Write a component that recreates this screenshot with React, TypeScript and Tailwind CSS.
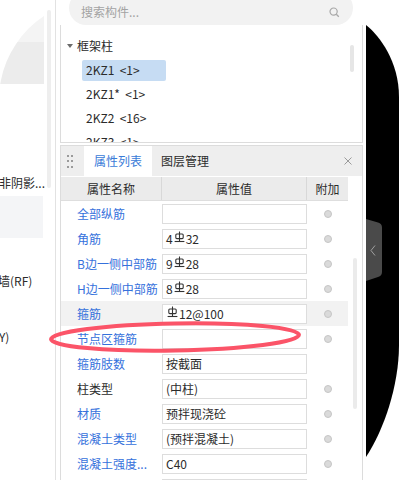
import React from "react";

const Rebar = () => (
  <svg width="11" height="12" viewBox="0 0 11 12" className="mb-[4px] mx-[1px] shrink-0">
    <line x1="5.5" y1="0.5" x2="5.5" y2="10" stroke="#333" strokeWidth="1.1" />
    <rect x="1.8" y="3" width="7.4" height="4.6" rx="1" fill="none" stroke="#333" strokeWidth="1.1" />
    <line x1="0.6" y1="10.5" x2="10.4" y2="10.5" stroke="#333" strokeWidth="1.1" />
  </svg>
);

function Value({ v }: { v: string }) {
  const parts = v.split("Φ");
  return (
    <>
      {parts.map((p, i) => (
        <React.Fragment key={i}>
          {i > 0 && <Rebar />}
          {p && <span>{p}</span>}
        </React.Fragment>
      ))}
    </>
  );
}

type Row = { name: string; blue: boolean; value: string; dot: boolean; gray?: boolean };

const rows: Row[] = [
  { name: "全部纵筋", blue: true, value: "", dot: true },
  { name: "角筋", blue: true, value: "4Φ32", dot: true },
  { name: "B边一侧中部筋", blue: true, value: "9Φ28", dot: true },
  { name: "H边一侧中部筋", blue: true, value: "8Φ28", dot: true },
  { name: "箍筋", blue: true, value: "Φ12@100", dot: true, gray: true },
  { name: "节点区箍筋", blue: true, value: "", dot: true },
  { name: "箍筋肢数", blue: true, value: "按截面", dot: false },
  { name: "柱类型", blue: false, value: "(中柱)", dot: true },
  { name: "材质", blue: true, value: "预拌现浇砼", dot: true },
  { name: "混凝土类型", blue: true, value: "(预拌混凝土)", dot: true },
  { name: "混凝土强度...", blue: true, value: "C40", dot: true },
  { name: "混凝土外加剂", blue: true, value: "(无)", dot: true },
];

export default function App() {
  return (
    <div className="relative w-[399px] h-[480px] overflow-hidden bg-white flex text-[12px] leading-none text-[#2b2b2b] font-['Noto_Sans_CJK_SC','Noto_Sans',sans-serif]">
      {/* Left panel */}
      <div className="relative w-[56px] h-full shrink-0 border-r border-[#e2e2e2] flex flex-col overflow-hidden">
        <svg width="45" height="90" className="absolute left-0 top-0">
          <defs>
            <clipPath id="lc">
              <circle cx="100" cy="100" r="101" />
            </clipPath>
          </defs>
          <g clipPath="url(#lc)">
            <rect x="0" y="0" width="44" height="42" fill="#f4f4f4" />
            <rect x="0" y="42" width="44" height="42" fill="#ececec" />
          </g>
        </svg>
        <div className="absolute left-[47px] top-[10px] w-[4px] h-[178px] rounded-full bg-[#eeeeee]" />
        <div className="mt-[171px] h-[24px] flex items-center -ml-[1px] whitespace-nowrap">非阴影...</div>
        <div className="mt-[1px] h-[42px] w-[43px] bg-[#f4f5f7]" />
        <div className="mt-[31px] h-[24px] flex items-center -ml-[2px] whitespace-nowrap">墙(RF)</div>
        <div className="mt-[32px] h-[24px] flex items-center -ml-[1px] whitespace-nowrap">Y)</div>
      </div>

      {/* Main panel */}
      <div className="ml-[4px] w-[303px] h-full shrink-0 flex flex-col">
        {/* search */}
        <div className="h-[25px] pl-[9px] pr-[10px] relative z-10">
          <div className="-mt-[9px] h-[34px] rounded-full bg-[#f2f2f2] flex items-center pt-[8px] pl-[12px] pr-[13px]">
            <span className="text-[#a3a3a3]">搜索构件...</span>
            <svg width="11" height="11" viewBox="0 0 11 11" className="ml-auto">
              <circle cx="4.6" cy="4.6" r="3.6" fill="none" stroke="#a8a8a8" strokeWidth="1.2" />
              <line x1="7.3" y1="7.3" x2="9.8" y2="9.8" stroke="#a8a8a8" strokeWidth="1.3" />
            </svg>
          </div>
        </div>

        {/* tree */}
        <div className="relative h-[118px] shrink-0 border-x border-b border-[#dcdcdc] overflow-hidden pt-[9px]">
          <div className="h-[24px] flex items-center pl-[6px]">
            <svg width="6" height="4" viewBox="0 0 6 4">
              <path d="M0 0 L6 0 L3 4 Z" fill="#6b6b6b" />
            </svg>
            <span className="ml-[4px]">框架柱</span>
          </div>
          {[
            { t: "2KZ1  <1>", sel: true },
            { t: "2KZ1*  <1>", sel: false },
            { t: "2KZ2  <16>", sel: false },
            { t: "2KZ3  <1>", sel: false },
          ].map((it) => (
            <div key={it.t} className="h-[24px] flex items-center pl-[21px]">
              <div
                className={
                  it.sel
                    ? "h-[21px] w-[84px] px-[4px] flex items-center rounded-[2px] bg-[#c6dcf3] whitespace-pre"
                    : "h-[21px] w-[84px] px-[4px] flex items-center whitespace-pre"
                }
              >
                {it.t}
              </div>
            </div>
          ))}
          <div className="absolute right-[8px] top-[20px] w-[4px] h-[27px] rounded-full bg-[#e6e6e6]" />
        </div>

        {/* property panel */}
        <div className="mt-[2px] flex-1 flex flex-col border-x border-t border-[#dcdcdc]">
          <div className="h-[31px] shrink-0 bg-[#eeeeee] border-b border-white flex items-stretch">
            <div className="ml-[6px] self-center grid grid-cols-2 gap-x-[2px] gap-y-[3.5px]">
              {[0, 1, 2, 3, 4, 5].map((i) => (
                <div key={i} className="w-[2px] h-[2px] bg-[#9a9a9a]" />
              ))}
            </div>
            <div className="ml-[11px] w-[68px] bg-white flex items-center justify-center text-[#3a7bd8]">属性列表</div>
            <div className="w-[68px] flex items-center justify-center ml-[-1px]">图层管理</div>
            <svg width="8" height="8" viewBox="0 0 8 8" className="ml-auto mr-[10px] self-center">
              <line x1="0.5" y1="0.5" x2="7.5" y2="7.5" stroke="#9a9a9a" strokeWidth="1" />
              <line x1="7.5" y1="0.5" x2="0.5" y2="7.5" stroke="#9a9a9a" strokeWidth="1" />
            </svg>
          </div>

          <div className="flex flex-1">
            <div className="w-[287px] shrink-0 flex flex-col">
              <div className="h-[24px] shrink-0 flex bg-[#ebebeb] border-b border-[#dedede]">
                <div className="w-[101px] border-r border-[#d8d8d8] flex items-center justify-center">属性名称</div>
                <div className="w-[145px] border-r border-[#d8d8d8] flex items-center justify-center">属性值</div>
                <div className="flex-1 flex items-center justify-center">附加</div>
              </div>
              {rows.map((r) => (
                <div
                  key={r.name}
                  className={r.gray ? "h-[25px] shrink-0 flex items-center bg-[#f2f2f2]" : "h-[25px] shrink-0 flex items-center"}
                >
                  <div
                    className={
                      r.blue
                        ? "w-[101px] pl-[16px] whitespace-nowrap text-[#3571dc]"
                        : "w-[101px] pl-[16px] whitespace-nowrap"
                    }
                  >
                    {r.name}
                  </div>
                  <div className="w-[145px] h-[20px] border border-[#dddddd] bg-white flex items-center pl-[3px] whitespace-nowrap">
                    <Value v={r.value} />
                  </div>
                  <div className="flex-1 flex items-center justify-center">
                    {r.dot && <div className="w-[8px] h-[8px] rounded-full bg-[#dadada] border border-[#c6c6c6]" />}
                  </div>
                </div>
              ))}
            </div>
            <div className="flex-1 flex flex-col">
              <div className="mt-[81px] ml-[5px] w-[4px] h-[151px] rounded-full bg-[#ebebeb]" />
            </div>
          </div>
        </div>
      </div>

      {/* Right dark shape */}
      <div className="ml-[3px] w-[33px] h-full shrink-0">
        <svg width="33" height="480" viewBox="0 0 33 480">
          <path d="M0 25 C 14 36 33 62 33 97 L 33 345 C 33 385 18 430 0 457 Z" fill="#000" />
          <path d="M0 219 L 12 222.5 Q 16 223.5 16 227.5 L 16 272 Q 16 276 12 277 L 0 281 Z" fill="#4a4a4a" />
          <polyline points="9,245.5 5,250.5 9,255.5" fill="none" stroke="#a0a0a0" strokeWidth="1" />
        </svg>
      </div>

      {/* annotation ellipse */}
      <svg width="399" height="480" className="absolute left-0 top-0 pointer-events-none">
        <ellipse cx="175" cy="337" rx="124" ry="13.5" transform="rotate(-1 175 337)" fill="none" stroke="#fb5468" strokeWidth="4" />
      </svg>
    </div>
  );
}
